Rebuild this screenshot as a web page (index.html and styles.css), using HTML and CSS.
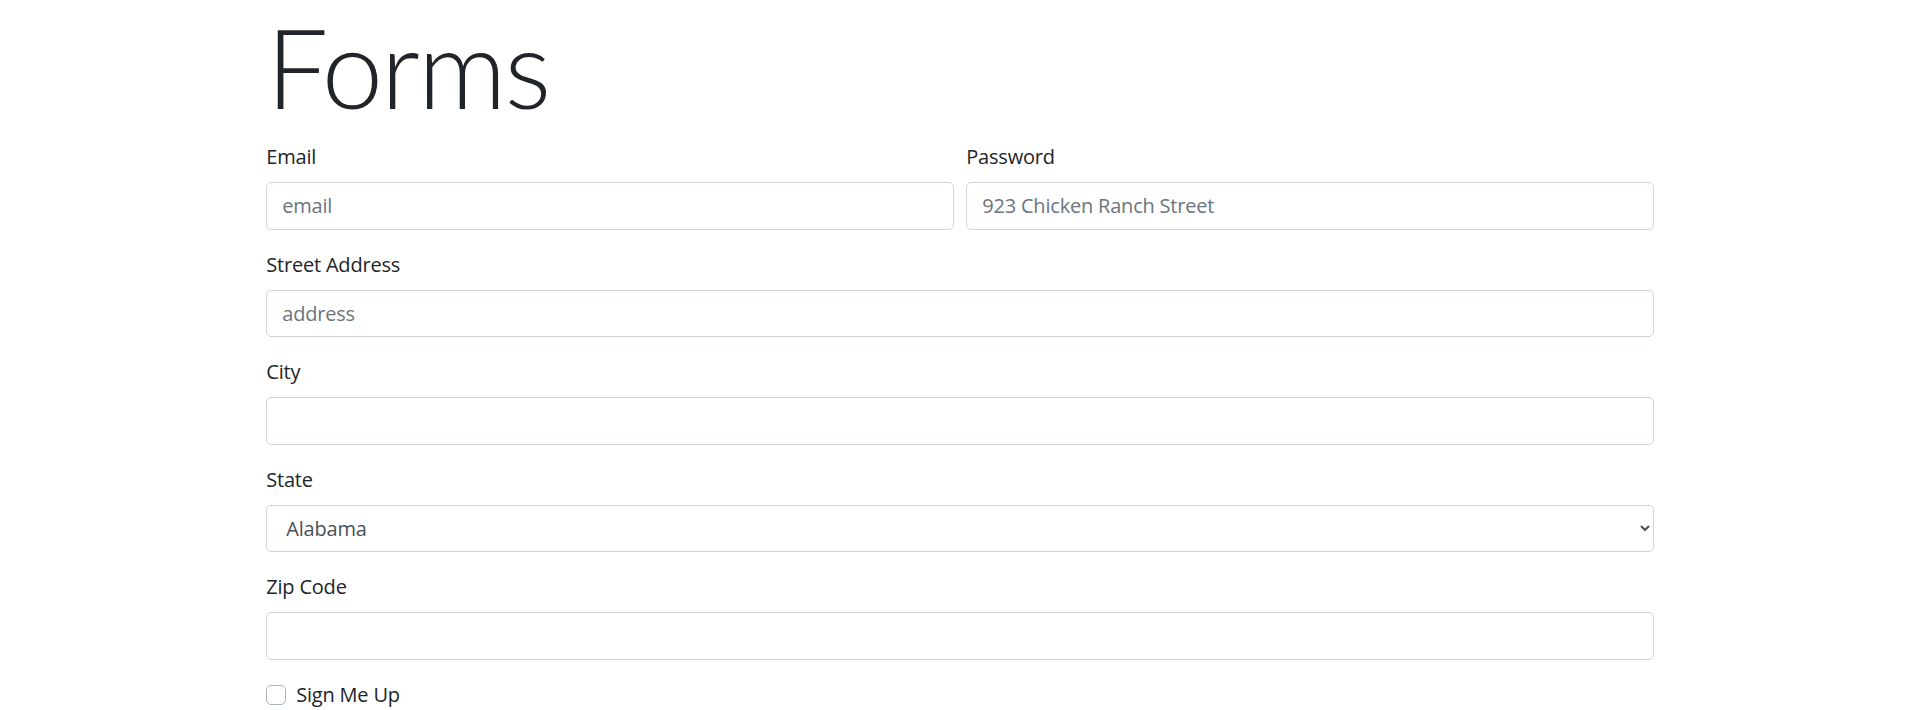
FILE: index.html
```html
<!DOCTYPE html>
<html lang="en">
<head>
<meta charset="utf-8">
<title>Forms</title>
<link rel="stylesheet" href="styles.css">
</head>
<body>
<div class="container">
  <h1 class="display">Forms</h1>
  <form>
    <div class="form-row">
      <div class="form-group col">
        <label for="email">Email</label>
        <input type="email" id="email" class="form-control" placeholder="email">
      </div>
      <div class="form-group col">
        <label for="password">Password</label>
        <input type="text" id="password" class="form-control" placeholder="923 Chicken Ranch Street">
      </div>
    </div>
    <div class="form-group">
      <label for="address">Street Address</label>
      <input type="text" id="address" class="form-control" placeholder="address">
    </div>
    <div class="form-group">
      <label for="city">City</label>
      <input type="text" id="city" class="form-control">
    </div>
    <div class="form-group">
      <label for="state">State</label>
      <select id="state" class="form-control select">
        <option>Alabama</option>
        <option>Alaska</option>
        <option>Arizona</option>
      </select>
    </div>
    <div class="form-group">
      <label for="zip">Zip Code</label>
      <input type="text" id="zip" class="form-control">
    </div>
    <div class="form-group">
      <label class="check"><span class="check-box"></span>Sign Me Up</label>
    </div>
  </form>
</div>
</body>
</html>
```
FILE: styles.css
```css
* { box-sizing: border-box; }

body {
  margin: 0;
  font-family: "Segoe UI", "Open Sans", "Noto Sans", sans-serif;
  font-size: 20px;
  line-height: 1.5;
  color: #212529;
  background: #fff;
}

.container {
  width: 1425px;
  margin: 0 auto;
  padding: 0 18.75px;
}

.display {
  font-family: "Segoe UI", "Lato", "Open Sans", sans-serif;
  font-size: 110px;
  font-weight: 300;
  line-height: 1.2;
  letter-spacing: -2px;
  margin: 0 0 10px;
}

form { margin: 0; }

.form-row {
  display: flex;
  margin: 0 -6.25px;
}

.col {
  flex: 1 1 0;
  padding: 0 6.25px;
}

.form-group { margin-bottom: 20px; }

label {
  display: inline-block;
  margin-bottom: 10px;
  letter-spacing: -0.2px;
}

.form-control {
  display: block;
  width: 100%;
  height: 47.5px;
  padding: 7.5px 15px;
  font-family: inherit;
  font-size: 20px;
  line-height: 1.5;
  letter-spacing: -0.2px;
  color: #495057;
  background: #fff;
  border: 1px solid #ced4da;
  border-radius: 5px;
  outline: none;
}

.form-control::placeholder { color: #6c757d; opacity: 1; }

.select { padding-left: 15px; }

.check {
  display: flex;
  align-items: center;
  margin-bottom: 0;
}

.check-box {
  width: 20px;
  height: 20px;
  margin-right: 10px;
  border: 1px solid #adb5bd;
  border-radius: 5px;
  background: #fff;
}
```
